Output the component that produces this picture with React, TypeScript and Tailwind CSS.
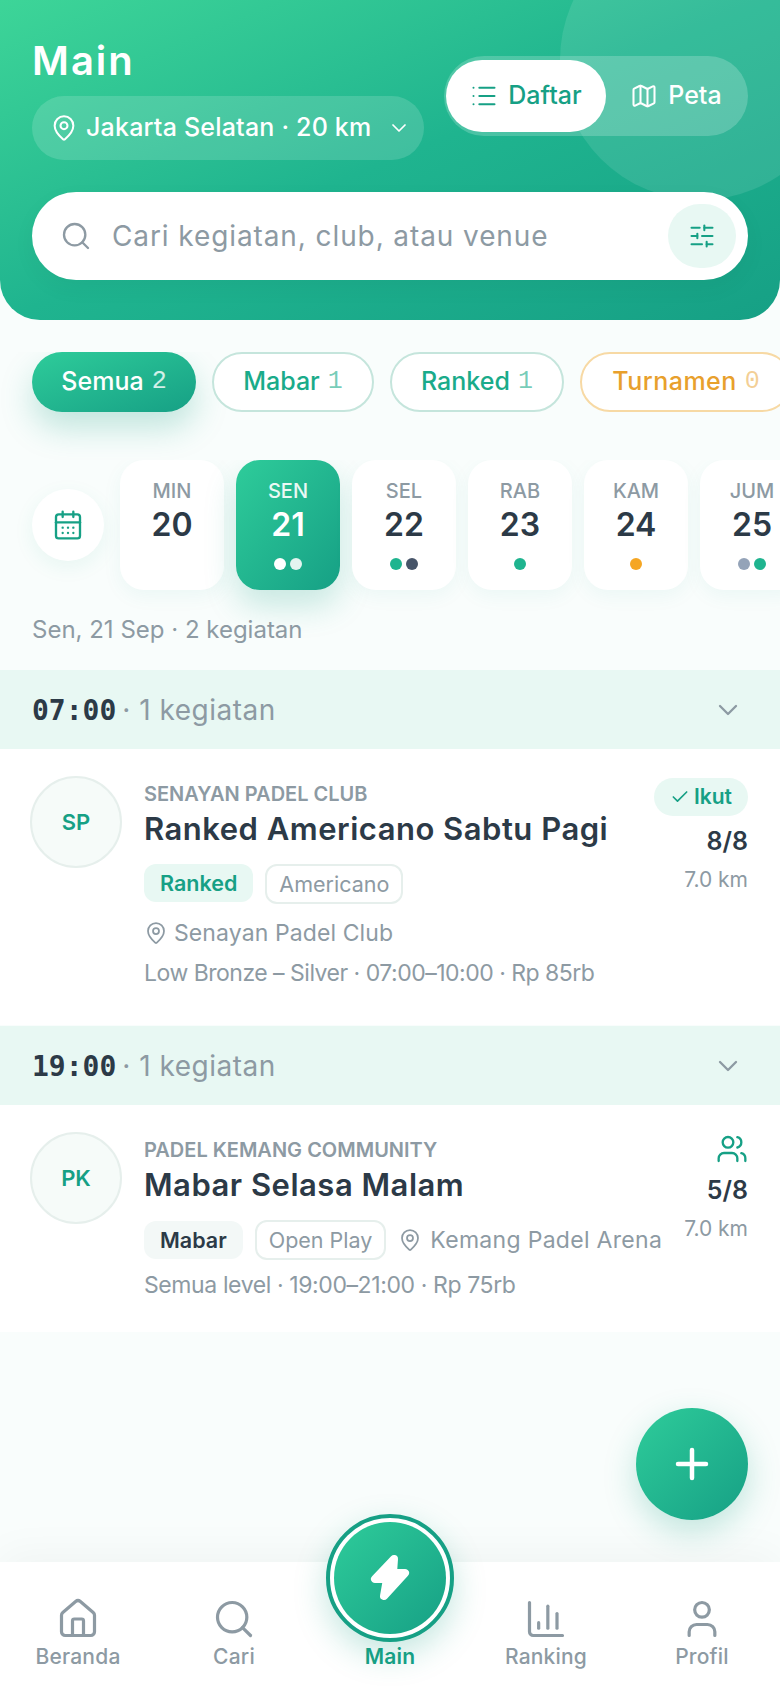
import { Check, ChartColumn, ChevronDown, House, List, Map as MapIcon, MapPin, Plus, Search, SlidersHorizontal, User, Users, CalendarDays } from "lucide-react";

const sans = "font-['Inter','Noto_Sans',sans-serif]";

const days = [
  { name: "MIN", num: "20", dots: [] as string[] },
  { name: "SEN", num: "21", dots: ["bg-white", "bg-[#e3f4ef]"], active: true },
  { name: "SEL", num: "22", dots: ["bg-[#1fb48f]", "bg-[#475569]"] },
  { name: "RAB", num: "23", dots: ["bg-[#1fb48f]"] },
  { name: "KAM", num: "24", dots: ["bg-[#f5a623]"] },
  { name: "JUM", num: "25", dots: ["bg-[#94a3b8]", "bg-[#1fb48f]"] },
];

const Bolt = () => (
  <svg width="46" height="54" viewBox="0 0 46 54" fill="white" stroke="white" strokeWidth="8" strokeLinejoin="round">
    <path d="M27 8 L8 28 H20 L17 45 L38 22 H26 Z" />
  </svg>
);

const GroupHeader = ({ time }: { time: string }) => (
  <div className="flex h-[79px] items-center justify-between bg-[#e8f8f3] pl-8 pr-[36px]">
    <div className="flex items-baseline pt-[2px]">
      <span className="font-['DejaVu_Sans_Mono',monospace] text-[28px] font-bold text-[#2c3a47]">{time}</span>
      <span className="ml-[6px] text-[28px] tracking-[0.5px] text-[#8d9aa3]">· 1 kegiatan</span>
    </div>
    <ChevronDown className="h-8 w-8 text-[#8d9aa3]" strokeWidth={1.75} />
  </div>
);

const Avatar = ({ text }: { text: string }) => (
  <div className="flex h-[92px] w-[92px] shrink-0 items-center justify-center rounded-full border-2 border-[#e6efec] bg-[#f6fbf9] text-[22px] font-semibold text-[#16a085]">
    {text}
  </div>
);

export default function App() {
  return (
    <div className={`relative flex h-[1688px] w-[780px] flex-col overflow-hidden bg-[#f9fdfc] ${sans}`}>
      {/* Header */}
      <header className="relative h-[320px] shrink-0 overflow-hidden rounded-b-[40px] bg-linear-to-br from-[#3dd598] via-[#1fb48f] to-[#16a085] px-8">
        <div className="absolute -right-[60px] -top-[80px] h-[280px] w-[280px] rounded-full bg-white/10" />
        <div className="relative flex items-start justify-between pt-[36px]">
          <div>
            <h1 className="text-[40px] leading-[50px] font-semibold tracking-[2px] text-white">Main</h1>
            <div className="mt-[10px] flex h-16 w-[392px] items-center gap-2 rounded-full bg-white/15 pl-[18px] text-white">
              <MapPin className="h-7 w-7 shrink-0" strokeWidth={1.75} />
              <span className="text-[25px] font-medium tracking-[0.2px] whitespace-nowrap">Jakarta Selatan · 20 km</span>
              <ChevronDown className="ml-2 h-6 w-6 shrink-0" strokeWidth={1.75} />
            </div>
          </div>
          <div className="mt-5 flex h-20 w-[304px] items-center rounded-full bg-white/20 p-[2px]">
            <div className="flex h-[72px] w-[160px] items-center justify-center gap-[10px] rounded-full bg-white text-[25px] font-medium text-[#16a085]">
              <List className="h-7 w-7" strokeWidth={1.75} />
              Daftar
            </div>
            <div className="flex flex-1 items-center justify-center gap-[10px] text-[25px] font-medium text-white">
              <MapIcon className="h-7 w-7" strokeWidth={1.75} />
              Peta
            </div>
          </div>
        </div>
        <div className="relative mt-8 flex h-[88px] items-center rounded-full bg-white pl-[28px] pr-3 shadow-[0_8px_24px_rgba(0,0,0,0.04)]">
          <Search className="h-8 w-8 text-[#8d9aa3]" strokeWidth={1.75} />
          <span className="ml-[20px] flex-1 text-[28px] tracking-[0.9px] text-[#8d9aa3]">Cari kegiatan, club, atau venue</span>
          <div className="flex h-16 w-[68px] items-center justify-center rounded-full bg-[#e8f8f3]">
            <SlidersHorizontal className="h-7 w-7 text-[#16a085]" strokeWidth={1.75} />
          </div>
        </div>
      </header>

      <main className="flex min-h-0 flex-1 flex-col">
        {/* Filter chips */}
        <div className="mt-8 flex gap-4 overflow-hidden pb-12 pl-8 text-[25px] font-medium">
          <div className="flex h-[60px] w-[164px] shrink-0 items-center justify-center gap-2 rounded-full bg-linear-to-br from-[#2ecc9a] to-[#16a085] text-white shadow-[0_16px_32px_rgba(22,160,133,0.25)]">
            Semua <span className="font-['Liberation_Mono',monospace] text-white/80">2</span>
          </div>
          <div className="flex h-[60px] w-[162px] shrink-0 items-center justify-center gap-2 rounded-full border-2 border-[#c5e5dc] bg-white text-[#1aab8a]">
            Mabar <span className="font-['Liberation_Mono',monospace] text-[#1aab8a]/60">1</span>
          </div>
          <div className="flex h-[60px] w-[174px] shrink-0 items-center justify-center gap-2 rounded-full border-2 border-[#c5e5dc] bg-white text-[#1aab8a]">
            Ranked <span className="font-['Liberation_Mono',monospace] text-[#1aab8a]/60">1</span>
          </div>
          <div className="flex h-[60px] w-[212px] shrink-0 items-center justify-center gap-2 rounded-full border-2 border-[#f7d9a4] bg-white text-[#e8a02c]">
            <span className="tracking-[0.5px]">Turnamen</span> <span className="font-['Liberation_Mono',monospace] text-[#e8a02c]/50">0</span>
          </div>
        </div>

        {/* Date strip */}
        <div className="flex items-center gap-3 overflow-hidden pb-[56px] pl-8">
          <div className="mr-1 flex h-[72px] w-[72px] shrink-0 items-center justify-center rounded-full bg-white shadow-[0_6px_20px_rgba(22,160,133,0.08)]">
            <CalendarDays className="h-8 w-8 text-[#16a085]" strokeWidth={1.75} />
          </div>
          {days.map((d) => (
            <div
              key={d.name}
              className={`flex h-[130px] w-[104px] shrink-0 flex-col items-center rounded-3xl pt-[17px] ${
                d.active
                  ? "bg-linear-to-br from-[#2ecc9a] to-[#16a085] text-white shadow-[0_16px_32px_rgba(22,160,133,0.22)]"
                  : "bg-white text-[#2c3a47] shadow-[0_6px_20px_rgba(22,160,133,0.06)]"
              }`}
            >
              <span className={`text-[20px] leading-7 font-medium ${d.active ? "text-white/90" : "text-[#8d9aa3]"}`}>{d.name}</span>
              <span className="text-[32px] leading-[40px] font-semibold">{d.num}</span>
              <div className="mt-[13px] flex gap-1">
                {d.dots.map((c, i) => (
                  <span key={i} className={`h-3 w-3 rounded-full ${c}`} />
                ))}
              </div>
            </div>
          ))}
        </div>

        <p className="-mt-8 pl-8 text-[24px] leading-8 text-[#8d9aa3]">Sen, 21 Sep · 2 kegiatan</p>

        {/* 07:00 */}
        <div className="mt-6">
          <GroupHeader time="07:00" />
          <div className="flex h-[276px] gap-[22px] bg-white pl-[30px] pr-8 pt-[27px]">
            <Avatar text="SP" />
            <div className="min-w-0 flex-1 pt-[2px]">
              <p className="text-[20px] leading-8 font-semibold text-[#8d9aa3]">SENAYAN PADEL CLUB</p>
              <h2 className="-mt-px text-[31px] leading-[40px] font-semibold tracking-[0.5px] whitespace-nowrap text-[#2c3a47]">Ranked Americano Sabtu Pagi</h2>
              <div className="mt-[15px] flex gap-3">
                <span className="flex h-[38px] items-center rounded-xl bg-[#e8f8f3] px-4 text-[21.5px] font-semibold text-[#16a085]">Ranked</span>
                <span className="flex h-[40px] items-center rounded-xl border-2 border-[#e6efec] px-[12px] text-[21.5px] whitespace-nowrap text-[#8d9aa3]">Americano</span>
              </div>
              <div className="mt-[9px] flex items-center gap-[6px] text-[23px] leading-[40px] tracking-[0.1px] text-[#8d9aa3]">
                <MapPin className="h-6 w-6" strokeWidth={1.75} />
                Senayan Padel Club
              </div>
              <p className="text-[23px] leading-[40px] tracking-[-0.5px] whitespace-nowrap text-[#8d9aa3]">Low Bronze – Silver · 07:00–10:00 · Rp 85rb</p>
            </div>
            <div className="flex shrink-0 flex-col items-end">
              <span className="mt-[2px] flex h-[38px] items-center gap-1 rounded-full bg-[#e8f8f3] px-4 text-[21px] font-semibold text-[#16a085]">
                <Check className="h-5 w-5" strokeWidth={2} />
                Ikut
              </span>
              <span className="mt-[7px] text-[25px] leading-9 font-semibold text-[#2c3a47]">8/8</span>
              <span className="mt-[7px] text-[21px] leading-7 text-[#8d9aa3]">7.0 km</span>
            </div>
          </div>
        </div>

        {/* 19:00 */}
        <div className="mt-px">
          <GroupHeader time="19:00" />
          <div className="flex h-[227px] gap-[22px] bg-white pl-[30px] pr-8 pt-[27px]">
            <Avatar text="PK" />
            <div className="min-w-0 flex-1 pt-[2px]">
              <p className="text-[20px] leading-8 font-semibold text-[#8d9aa3]">PADEL KEMANG COMMUNITY</p>
              <h2 className="-mt-px text-[31px] leading-[40px] font-semibold tracking-[0.5px] text-[#2c3a47]">Mabar Selasa Malam</h2>
              <div className="mt-[15px] flex w-[520px] items-center gap-3">
                <span className="flex h-[38px] shrink-0 items-center rounded-xl bg-[#f3f8f7] px-4 text-[21.5px] font-semibold text-[#2c3a47]">Mabar</span>
                <span className="flex h-[40px] shrink-0 items-center rounded-xl border-2 border-[#e6efec] px-3 text-[21.5px] whitespace-nowrap text-[#8d9aa3]">Open Play</span>
                <MapPin className="h-6 w-6 shrink-0 text-[#8d9aa3]" strokeWidth={1.75} />
                <span className="-ml-1 text-[23px] tracking-[0.3px] whitespace-nowrap text-[#8d9aa3]">Kemang Padel Arena</span>
              </div>
              <p className="mt-[5px] text-[23px] leading-[40px] tracking-[-0.4px] text-[#8d9aa3]">Semua level · 19:00–21:00 · Rp 75rb</p>
            </div>
            <div className="flex shrink-0 flex-col items-end">
              <Users className="mt-px h-8 w-8 text-[#16a085]" strokeWidth={1.75} />
              <span className="mt-[7px] text-[25px] leading-9 font-semibold text-[#2c3a47]">5/8</span>
              <span className="mt-[7px] text-[21px] leading-7 text-[#8d9aa3]">7.0 km</span>
            </div>
          </div>
        </div>
      </main>

      {/* FAB */}
      <div className="absolute right-8 top-[1408px] flex h-28 w-28 items-center justify-center rounded-full bg-linear-to-br from-[#2ecc9a] to-[#16a085] shadow-[0_12px_32px_rgba(22,160,133,0.25)]">
        <Plus className="h-12 w-12 text-white" strokeWidth={2.25} />
      </div>

      {/* Bottom nav */}
      <nav className="relative grid h-[126px] shrink-0 grid-cols-5 bg-white text-[21px] font-medium tracking-[0.2px] text-[#8d9aa3] shadow-[0_-8px_40px_rgba(0,0,0,0.04)]">
        <div className="flex flex-col items-center justify-end pb-[16px]">
          <House className="h-11 w-11" strokeWidth={1.75} />
          Beranda
        </div>
        <div className="flex flex-col items-center justify-end pb-[16px]">
          <Search className="h-11 w-11" strokeWidth={1.75} />
          Cari
        </div>
        <div className="flex flex-col items-center justify-end pb-[16px] font-semibold text-[#16a085]">Main</div>
        <div className="flex flex-col items-center justify-end pb-[16px]">
          <ChartColumn className="h-11 w-11" strokeWidth={1.75} />
          Ranking
        </div>
        <div className="flex flex-col items-center justify-end pb-[16px]">
          <User className="h-11 w-11" strokeWidth={1.75} />
          Profil
        </div>
        <div className="absolute -top-[48px] left-1/2 flex h-[128px] w-[128px] -translate-x-1/2 items-center justify-center rounded-full border-4 border-[#16a085] bg-white shadow-[0_12px_32px_rgba(22,160,133,0.25)]">
          <div className="flex h-[112px] w-[112px] items-center justify-center rounded-full bg-linear-to-br from-[#2ecc9a] to-[#16a085]">
            <Bolt />
          </div>
        </div>
      </nav>
    </div>
  );
}
